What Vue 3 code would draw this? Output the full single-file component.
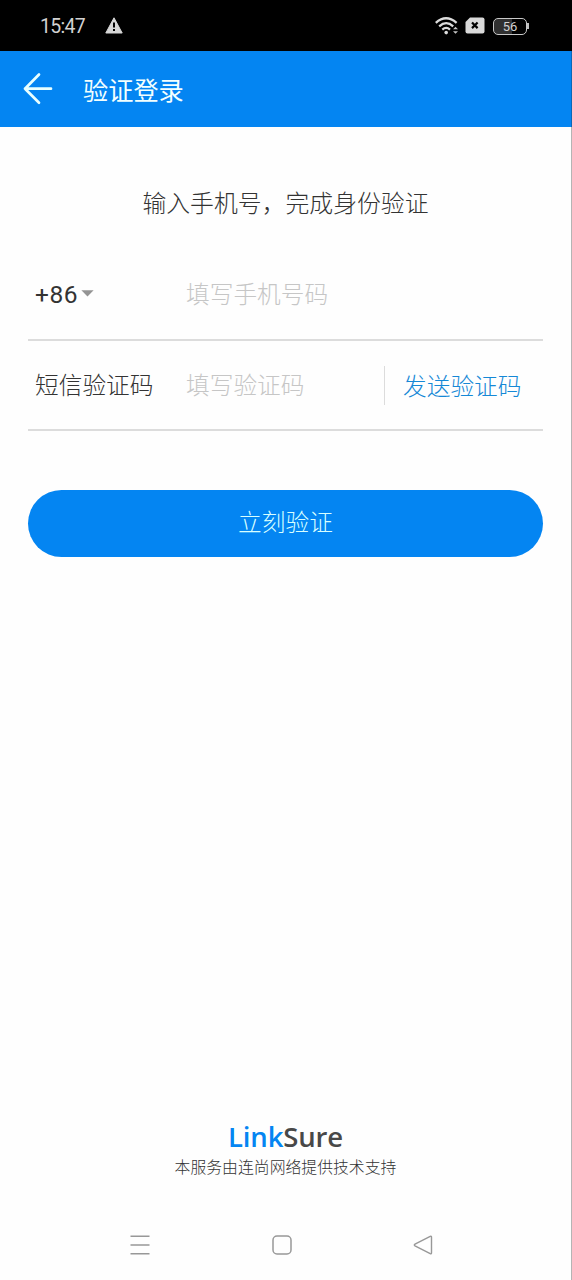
<script setup>
import { ref } from 'vue'

const phone = ref('')
const code = ref('')
</script>

<template>
  <div class="screen">
    <div class="status">
      <span class="clock">15:47</span>
      <svg class="warn" width="18" height="17" viewBox="0 0 18 17">
        <path d="M9 .8 17.2 16H.8Z" fill="#d6d6d6" stroke="#d6d6d6" stroke-linejoin="round" />
        <path d="M9 5.5v5" stroke="#000" stroke-width="2" />
        <path d="M9 12v2" stroke="#000" stroke-width="2" />
      </svg>
      <div class="indicators">
        <svg width="24" height="20" viewBox="0 0 24 20">
          <g fill="none" stroke="#dcdcdc" stroke-width="2.3">
            <path d="M.8 6.8Q11 -2.2 21.6 6.8" />
            <path d="M4.2 10.3Q11.2 4 18.2 10.3" />
            <path d="M7.3 13.6Q11.2 10.2 15 13.6" />
          </g>
          <circle cx="11.2" cy="16.6" r="1.8" fill="#dcdcdc" />
          <path d="M18 13.3 20.5 10.8 23 13.3ZM18 15.3 20.5 17.8 23 15.3Z" fill="#c4c4c4" />
        </svg>
        <svg class="sim" width="20" height="17" viewBox="0 0 20 17">
          <path d="M5 .5H17.5Q19.5.5 19.5 2.5V14.5Q19.5 16.5 17.5 16.5H2.5Q.5 16.5.5 14.5V5Z" fill="#d9d9d9" />
          <path d="M7 5.5 12.6 11.1M12.6 5.5 7 11.1" stroke="#000" stroke-width="2.2" />
        </svg>
        <div class="battery"><span>56</span></div>
      </div>
    </div>

    <header class="bar">
      <svg width="32" height="34" viewBox="0 0 32 34" fill="none" stroke="#e9ffff" stroke-width="2.7" stroke-linecap="round" stroke-linejoin="round">
        <path d="M18 2.5 4 16.7 18 30.8M4 16.7H30" />
      </svg>
      <h1>验证登录</h1>
    </header>

    <main class="content">
      <p class="intro">输入手机号，完成身份验证</p>
      <div class="row phone">
        <div class="label country">
          +86
          <svg width="13" height="7" viewBox="0 0 13 7"><path d="M.4.3H12.6L6.5 6.5Z" fill="#949494" /></svg>
        </div>
        <input v-model="phone" class="field" placeholder="填写手机号码" />
      </div>
      <div class="row sms">
        <div class="label">短信验证码</div>
        <input v-model="code" class="field" placeholder="填写验证码" />
        <button class="send">发送验证码</button>
      </div>
      <button class="submit">立刻验证</button>
    </main>

    <footer class="footer">
      <div class="brand"><span>Link</span>Sure</div>
      <p>本服务由连尚网络提供技术支持</p>
    </footer>

    <nav class="nav">
      <svg width="20" height="20" viewBox="0 0 20 20" stroke="#989898" stroke-width="1.5"><path d="M.5 1.3H19.5M.5 10H19.5M.5 18.7H19.5" /></svg>
      <svg width="20" height="20" viewBox="0 0 20 20" fill="none" stroke="#989898" stroke-width="1.5"><rect x="1" y="1" width="18" height="18" rx="4" /></svg>
      <svg width="20" height="20" viewBox="0 0 20 20" fill="none" stroke="#989898" stroke-width="1.4"><path d="M17.2 1.3Q18.5.8 18.5 2.2V17.8Q18.5 19.2 17.2 18.7L2 10.9Q.6 10 2 9.1Z" /></svg>
    </nav>
  </div>
</template>

<style>
body { margin: 0; }
</style>

<style scoped>
.screen {
  display: flex;
  flex-direction: column;
  width: 572px;
  height: 1280px;
  overflow: hidden;
  background: #fefefe;
  color: #333;
  font-family: "Noto Sans CJK SC", sans-serif;
  font-weight: 300;
}
.status {
  display: flex;
  align-items: center;
  flex: none;
  box-sizing: border-box;
  height: 51px;
  padding: 0 43px 0 40px;
  background: #000;
  color: #d2d2d2;
}
.clock {
  width: 65px;
  font: 400 19.5px/24px Roboto, sans-serif;
  letter-spacing: -.7px;
  padding-top: 3px;
}
.indicators { display: flex; align-items: center; margin-left: auto; }
.sim { margin-left: 6px; }
.battery {
  position: relative;
  box-sizing: border-box;
  width: 34px;
  height: 17px;
  margin: 1px 2px 0 8px;
  border: 1.5px solid #c8c8c8;
  border-radius: 5px;
  background: linear-gradient(90deg, #303030 55%, #000 55%);
  font: 400 13px/15px Roboto, sans-serif;
  text-align: center;
}
.battery::after {
  content: "";
  position: absolute;
  top: 4px;
  right: -3px;
  width: 2px;
  height: 6px;
  background: #c0c0c0;
}
.bar {
  display: flex;
  align-items: center;
  flex: none;
  box-sizing: border-box;
  height: 76px;
  padding-left: 21px;
  border-right: 1px solid #0a68b8;
  background: #0485f2;
  color: #f2ffff;
}
.bar h1 {
  margin: 0 0 1px 30px;
  font-size: 25.2px;
  line-height: 38px;
  font-weight: 400;
}
.content {
  flex: 1;
  padding: 55px 28px 0;
  border-right: 1px solid #b4b4b4;
}
.intro {
  margin: 0;
  font-size: 23.85px;
  line-height: 40px;
  text-align: center;
}
.row {
  display: flex;
  align-items: center;
  box-sizing: border-box;
  height: 91px;
  border-bottom: 2px solid #dcdcdc;
  font-size: 23.7px;
}
.phone { margin-top: 28px; }
.sms { height: 90px; }
.label { width: 151px; padding: 0 0 3px 7px; line-height: 36px; white-space: nowrap; }
.country {
  display: flex;
  align-items: center;
  gap: 3px;
  padding-bottom: 0;
  font-family: Roboto, sans-serif;
  font-size: 24.5px;
  font-weight: 400;
  letter-spacing: .6px;
}
.country svg { margin-bottom: 2px; }
.field {
  flex: 1;
  min-width: 0;
  height: 40px;
  padding: 0 0 2px;
  border: 0;
  outline: 0;
  box-sizing: border-box;
  background: none;
  color: #333;
  font: inherit;
}
.phone .field { padding-bottom: 4px; }
.field::placeholder { color: #c6c6c6; opacity: 1; }
.send {
  box-sizing: border-box;
  width: 159px;
  height: 39px;
  padding: 0 0 1px 18px;
  border: 0;
  border-left: 1px solid #dcdcdc;
  background: none;
  color: #1588d6;
  font: inherit;
  text-align: left;
}
.submit {
  display: block;
  width: 100%;
  height: 67px;
  margin-top: 59px;
  padding: 0 0 5px;
  border: 0;
  border-radius: 34px;
  background: #0485f2;
  color: #d8ffff;
  font: inherit;
  font-size: 23.7px;
}
.footer {
  height: 100px;
  border-right: 1px solid #b4b4b4;
  text-align: center;
}
.brand {
  color: #484848;
  font: 600 27.5px/37px "Open Sans", sans-serif;
  letter-spacing: -.15px;
}
.brand span { color: #0485f2; }
.footer p { margin: 0; font-size: 15.85px; line-height: 24px; }
.nav {
  display: flex;
  justify-content: space-between;
  flex: none;
  box-sizing: border-box;
  height: 62px;
  padding: 17px 138px 0 130px;
  border-right: 1px solid #b4b4b4;
}
</style>
